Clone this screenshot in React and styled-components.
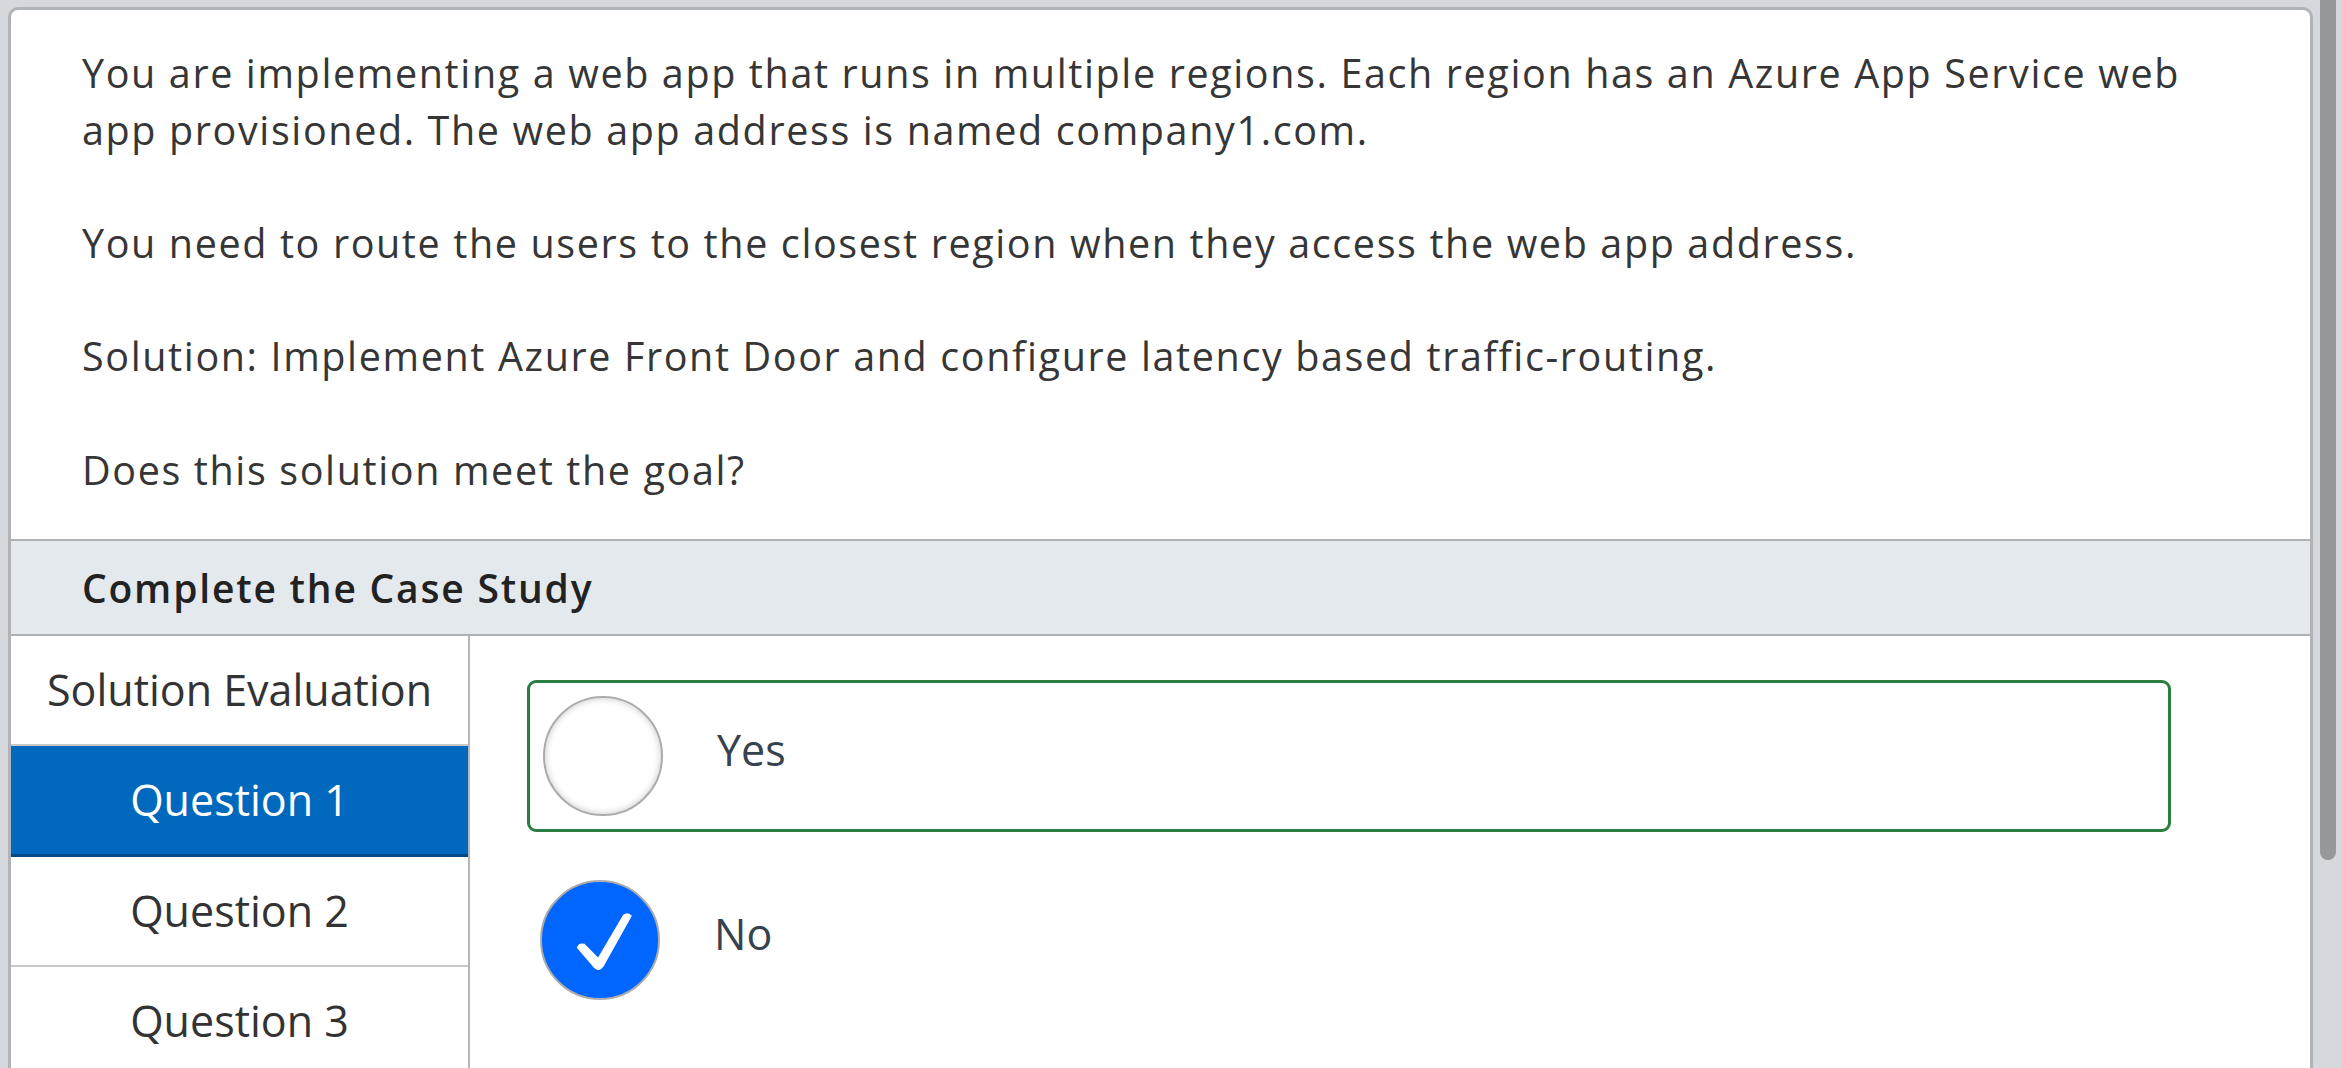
import React from "react";
import styled, { createGlobalStyle } from "styled-components";

const GlobalStyle = createGlobalStyle`
  html, body { margin: 0; padding: 0; height: 100%; }
  body {
    background: #d5d8dc;
    overflow: hidden;
    font-family: "Open Sans", "Liberation Sans", sans-serif;
  }
`;

const Page = styled.div`
  display: flex;
  height: 100vh;
  padding: 7px 0 0 8px;
  box-sizing: border-box;
`;

const Card = styled.main`
  flex: 1;
  min-width: 0;
  background: #ffffff;
  border: 3px solid #b0b3b7;
  border-bottom: none;
  border-radius: 10px 10px 0 0;
  overflow: hidden;
  display: flex;
  flex-direction: column;
`;

const ScrollTrack = styled.div`
  width: 29px;
  flex-shrink: 0;
  display: flex;
  justify-content: center;
`;

const ScrollThumb = styled.div`
  width: 16px;
  height: 860px;
  margin-top: -7px;
  background: #96999c;
  border-radius: 0 0 8px 8px;
`;

const Stem = styled.section`
  padding: 35px 40px 40px 71px;
  color: #363636;
  font-size: 39.5px;
  line-height: 56.7px;
  letter-spacing: 1.62px;
`;

const Para = styled.p`
  margin: 0 0 56.7px;
  white-space: nowrap;
  &:last-child { margin-bottom: 0; }
`;

const Header = styled.header`
  height: 93px;
  display: flex;
  align-items: center;
  padding-left: 71px;
  background: #e4e9ed;
  border-top: 2px solid #adb0b4;
  border-bottom: 2px solid #adb0b4;
  font-size: 39px;
  font-weight: 600;
  color: #222222;
  letter-spacing: 1.8px;
`;

const Body = styled.div`
  flex: 1;
  display: flex;
  min-height: 0;
`;

const Sidebar = styled.nav`
  width: 457px;
  flex-shrink: 0;
  border-right: 2px solid #b6b6b6;
  display: flex;
  flex-direction: column;
`;

const NavItem = styled.div`
  padding: 24px 0;
  text-align: center;
  font-size: 43px;
  line-height: 60px;
  color: ${(p) => (p.$active ? "#ffffff" : "#333333")};
  background: ${(p) => (p.$active ? "#0068bd" : "#ffffff")};
  border-bottom: ${(p) =>
    p.$active ? "3px solid #004a88" : "2px solid #c8c8c8"};
`;

const Options = styled.div`
  flex: 1;
  padding: 44px 139px 0 57px;
  display: flex;
  flex-direction: column;
  gap: 35px;
`;

const Option = styled.label`
  display: flex;
  align-items: center;
  padding: 13px;
  border: ${(p) => (p.$focused ? "3px solid #2a7e3f" : "none")};
  border-radius: 9px;
  cursor: pointer;
`;

const Radio = styled.span`
  width: 120px;
  height: 120px;
  flex-shrink: 0;
  box-sizing: border-box;
  border-radius: 50%;
  border: 2px solid #acacac;
  background: ${(p) => (p.$checked ? "#0066ff" : "#ffffff")};
  box-shadow: ${(p) =>
    p.$checked ? "none" : "inset 0 0 7px rgba(0, 0, 0, 0.22)"};
  display: flex;
  align-items: center;
  justify-content: center;
`;

const OptionLabel = styled.span`
  margin-left: 54px;
  padding-bottom: 13px;
  font-size: 43px;
  color: #36424d;
`;

const Check = () => (
  <svg width="116" height="116" viewBox="0 0 120 120">
    <path
      d="M36 68 Q38 62 44 64 L58 78 L84 34 Q89 30 93 35 L64 87 Q59 94 54 89 Z"
      fill="#ffffff"
    />
  </svg>
);

export default function App() {
  return (
    <>
      <GlobalStyle />
      <Page>
        <Card>
          <Stem>
            <Para>
              You are implementing a web app that runs in multiple regions. Each region has an Azure App Service web
              <br />
              app provisioned. The web app address is named company1.com.
            </Para>
            <Para>You need to route the users to the closest region when they access the web app address.</Para>
            <Para>Solution: Implement Azure Front Door and configure latency based traffic-routing.</Para>
            <Para>Does this solution meet the goal?</Para>
          </Stem>
          <Header>Complete the Case Study</Header>
          <Body>
            <Sidebar>
              <NavItem>Solution Evaluation</NavItem>
              <NavItem $active>Question 1</NavItem>
              <NavItem>Question 2</NavItem>
              <NavItem>Question 3</NavItem>
            </Sidebar>
            <Options>
              <Option $focused>
                <Radio />
                <OptionLabel>Yes</OptionLabel>
              </Option>
              <Option>
                <Radio $checked>
                  <Check />
                </Radio>
                <OptionLabel>No</OptionLabel>
              </Option>
            </Options>
          </Body>
        </Card>
        <ScrollTrack>
          <ScrollThumb />
        </ScrollTrack>
      </Page>
    </>
  );
}
